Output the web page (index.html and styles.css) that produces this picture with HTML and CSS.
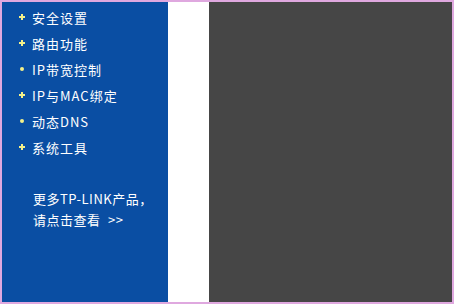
FILE: index.html
```html
<!DOCTYPE html>
<html lang="zh-CN">
<head>
<meta charset="UTF-8">
<title>TP-LINK</title>
<link rel="stylesheet" href="styles.css">
</head>
<body>

<div class="frame">
    <div class="menu">
        <ul class="items">
            <li><span class="plus"></span>安全设置</li>
            <li><span class="plus"></span>路由功能</li>
            <li><span class="dot"></span>IP带宽控制</li>
            <li><span class="plus"></span>IP与MAC绑定</li>
            <li><span class="dot"></span>动态DNS</li>
            <li><span class="plus"></span>系统工具</li>
        </ul>

        <div class="more">
            更多TP-LINK产品，<br>
            请点击查看 <span class="arrow">&gt;&gt;</span>
        </div>
    </div>

    <div class="gap"></div>

    <div class="main"></div>
</div>

</body>
</html>
```

FILE: styles.css
```css
body {
    margin: 0;
    height: 304px;
    background: #dfa8df;
    font-family: 'Noto Sans CJK SC', sans-serif;
}

.frame {
    display: flex;
    height: 300px;
    padding: 2px;
}

/* 左侧菜单 */
.menu {
    width: 166px;
    background: #0a4ea3;
    color: #fff;
    font-size: 13px;
}

.items {
    list-style: none;
    margin: 0;
    padding: 2px 0 0 17px;
}

.items li {
    display: flex;
    align-items: center;
    height: 26px;
    letter-spacing: 1px;
}

.plus {
    width: 6px;
    height: 6px;
    margin-right: 7px;
    background:
        linear-gradient(#f4f08a, #f4f08a) center / 6px 2px no-repeat,
        linear-gradient(#f4f08a, #f4f08a) center / 2px 6px no-repeat;
}

.dot {
    width: 4px;
    height: 4px;
    margin: 0 8px 0 1px;
    border-radius: 50%;
    background: #f4f08a;
}

.more {
    padding: 28px 0 0 31px;
    line-height: 21px;
    letter-spacing: 0.5px;
}

.arrow {
    margin-left: 4px;
}

.gap {
    width: 41px;
    background: #fff;
}

.main {
    flex: 1;
    background: #464646;
}
```
